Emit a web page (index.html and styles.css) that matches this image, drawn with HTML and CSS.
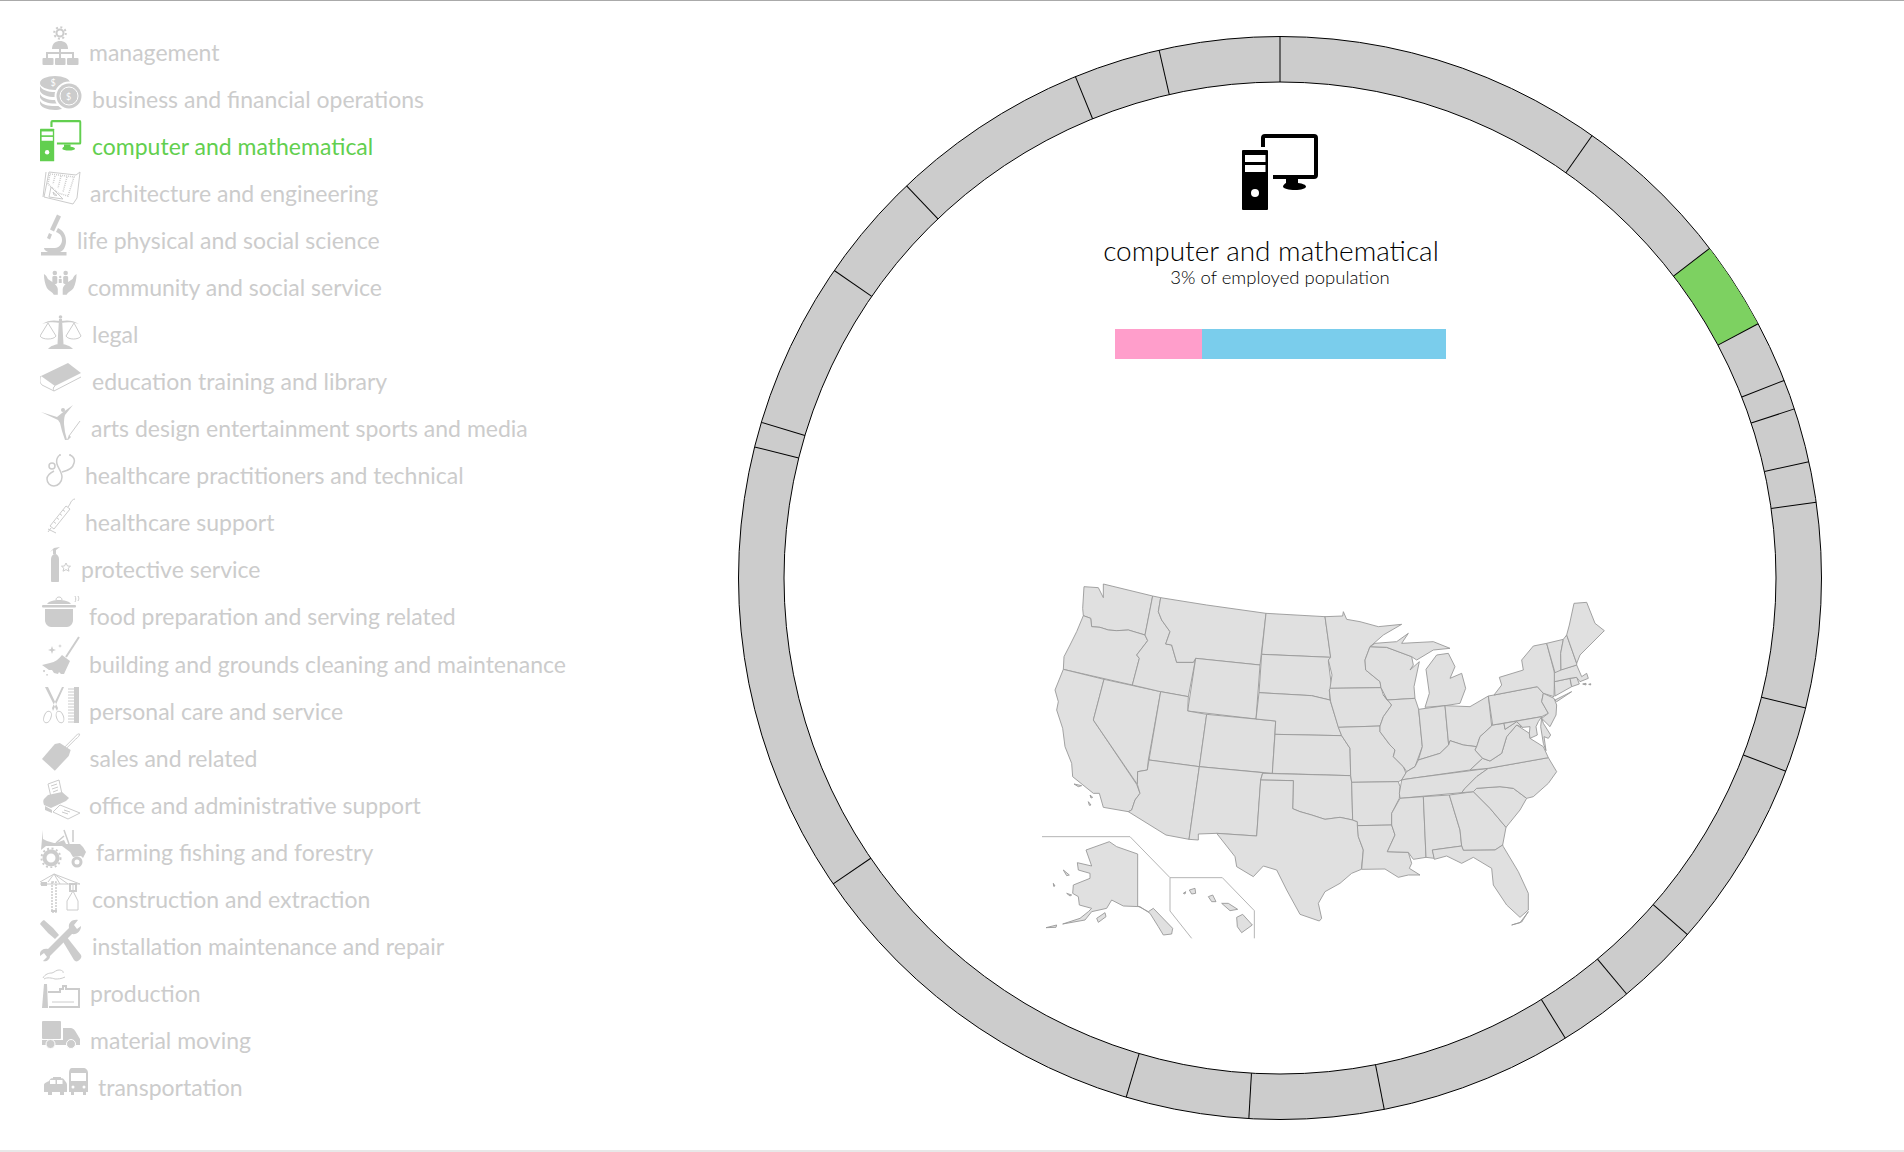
FILE: index.html
```html
<!DOCTYPE html>
<html>
<head>
  <title>Employment by occupation</title>
  <link rel="stylesheet" href="styles.css">
</head>
<body>
  <!-- Shared computer icon, used in the list and in the centre panel -->
  <svg class="defs" width="0" height="0">
    <symbol id="ico-computer" viewBox="0 0 76 76">
      <path d="M1 16h24a1 1 0 0 1 1 1v58a1 1 0 0 1-1 1H1a1 1 0 0 1-1-1V17a1 1 0 0 1 1-1z"/>
      <rect x="3" y="21" width="20.500" height="7" fill="#fff"/>
      <rect x="3" y="31" width="20.500" height="7" fill="#fff"/>
      <circle cx="13" cy="59" r="4" fill="#fff"/>
      <path d="M21 13V4a2 2 0 0 1 2-2h49a2 2 0 0 1 2 2v37a2 2 0 0 1-2 2H31" fill="none" stroke="currentColor" stroke-width="4"/>
      <path d="M44 45h12v4c5 .5 8 2 8 3.500 0 2-5 3.500-11 3.500s-12-1.500-12-3.500c0-1.500 2-3 3-3.500z"/>
    </symbol>
  </svg>

  <!-- Occupation list -->
  <ul class="jobs">
    <li class="job">
      <svg class="icon" width="40" height="44" viewBox="0 0 40 44">
        <circle cx="20" cy="9" r="3.500" class="ln2"/>
        <circle cx="20" cy="9" r="5.800" class="teeth"/>
        <path d="M12 25c0-6 4-8 8-8s8 2 8 8z"/>
        <path class="ln2" d="M20 25v9M7 34v-5h26v5"/>
        <rect x="2.500" y="34" width="11" height="7" rx="1"/>
        <rect x="15" y="34" width="10.500" height="7" rx="1"/>
        <rect x="27" y="34" width="11.500" height="7" rx="1"/>
      </svg>
      <span>management</span>
    </li>
    <li class="job">
      <svg class="icon" width="43" height="44" viewBox="0 0 43 44">
        <ellipse cx="15" cy="12" rx="15" ry="7"/>
        <path d="M0 15c2 4 8 6 15 6 4 0 6 0 9-2v6c-3 1-5 1-9 1-7 0-13-2-15-6z"/>
        <path d="M0 23c2 4 8 6 15 6h3l1 3c-1 0-3 .500-4 .500-7 0-13-2-15-6z"/>
        <path d="M0 30c2 4 8 5 15 5h5l2 3c-2 .500-5 1-7 1-8 0-15-3-15-7z"/>
        <circle cx="29" cy="25" r="14.500" fill="#fff"/>
        <circle cx="29" cy="25" r="12.500"/>
        <circle cx="29" cy="25" r="9" fill="none" stroke="#fff"/>
        <text class="coin" x="10.500" y="15">$</text>
        <text class="coin" x="26" y="29">$</text>
      </svg>
      <span>business and financial operations</span>
    </li>
    <li class="job active">
      <svg class="icon" width="43" height="44" viewBox="0 0 43 44"><use href="#ico-computer" x="0" y="2" width="41.500" height="41.500"/></svg>
      <span>computer and mathematical</span>
    </li>
    <li class="job">
      <svg class="icon" width="41" height="44" viewBox="0 0 41 44">
        <path class="ln" d="M9 7l27 3 4-3-3 26-4 6-29-7z"/>
        <path class="ln" d="M3 32l3-25"/>
        <path class="grid" d="M10 9l24 3-6 19-10-3-10-9zM15 11l-2 8M21 11l-3 12M27 12l-4 15"/>
        <path class="ln" d="M11 22l12 12-14-2zM13 27l1 3 3 .500z"/>
      </svg>
      <span>architecture and engineering</span>
    </li>
    <li class="job">
      <svg class="icon" width="28" height="44" viewBox="0 0 28 44">
        <path d="M17 2.500l4 2-7 15-4-2z"/>
        <path d="M18 16c6 3 8 8 8 13 0 6-3 10-6 11H8c-3-1-4-3-4-4h11c4 0 7-4 7-8 0-3-1-6-6-8z"/>
        <path d="M9 21l3 1.500-2 5-3-1.500z"/>
        <rect x="1" y="40" width="25.500" height="3.500"/>
      </svg>
      <span>life physical and social science</span>
    </li>
    <li class="job">
      <svg class="icon" width="38.500" height="44" viewBox="0 0 39 44">
        <path d="M4 15c2 1 3 3 4 5l6 4c2 2 4 4 4 6v6h-4c-1-3-5-4-7-7-2-4-3-9-3-14z"/>
        <path d="M37 15c-2 1-3 3-4 5l-6 4c-2 2-4 4-4 6v6h4c1-3 5-4 7-7 2-4 3-9 3-14z"/>
        <circle cx="15" cy="14" r="2.300"/><circle cx="26" cy="14" r="2.300"/>
        <rect x="12.500" y="17" width="5" height="8" rx="1.500"/><rect x="23.500" y="17" width="5" height="8" rx="1.500"/>
        <circle cx="20.500" cy="18" r="1.200"/><rect x="19" y="20" width="3" height="4"/>
      </svg>
      <span>community and social service</span>
    </li>
    <li class="job">
      <svg class="icon" width="43" height="44" viewBox="0 0 43 44">
        <circle cx="20.500" cy="10" r="1.800"/>
        <path d="M19 12h3l1.500 25h-6zM2 17c6-4 12-4 18-3h1c6-1 12-1 18 3-6-2-12-2-18-1h-1c-6-1-12-1-18 1z"/>
        <path d="M8 42c2-3 8-5 12.500-5s10 2 12.500 5z"/>
        <path class="ln" d="M8 16L0 29c2 4 14 4 16 0zM34 16l-8 13c2 4 13 4 15 0z"/>
      </svg>
      <span>legal</span>
    </li>
    <li class="job">
      <svg class="icon" width="43" height="44" viewBox="0 0 43 44">
        <path d="M1 22L28 9l13 10-26 13z"/>
        <path class="ln" d="M1 22c-2 4-1 7 1 9l12 6 27-14M15 32c-2 1-2 3-1 5"/>
      </svg>
      <span>education training and library</span>
    </li>
    <li class="job">
      <svg class="icon" width="42" height="44" viewBox="0 0 42 44">
        <circle cx="23" cy="9" r="2"/>
        <path d="M1 11l16 5 5-4 11-8-8 10c-1 3-1 6-1 9l1 8 2 8h-2l-3-9-2-8-2-3z"/>
        <path class="ln" d="M40 20L29 35"/>
        <path d="M29 34l2 2-3 3-1 0z"/>
      </svg>
      <span>arts design entertainment sports and media</span>
    </li>
    <li class="job">
      <svg class="icon" width="36" height="44" viewBox="0 0 36 44">
        <path class="ln1" d="M20 7c-3 2-4 5-3 9 1 4 5 8 5 13 0 5-4 9-8 9s-7-3-7-7c0-4 3-6 7-8M30 7c4 2 5 5 4 8-1 5-7 8-12 9"/>
        <circle cx="20" cy="7" r="1"/><circle cx="30" cy="7" r="1"/>
        <circle cx="12" cy="18" r="3" class="ln1"/>
      </svg>
      <span>healthcare practitioners and technical</span>
    </li>
    <li class="job">
      <svg class="icon" width="36" height="44" viewBox="0 0 36 44">
        <path class="ln" d="M10 31l16-20 4 3-16 20zM8 34l8 4M8 37l3-4M28 12l2-3c1-3 3-5 5-5M14 27l2 1.500M17 23l2 1.500M20 19l2 1.500M23 15l2 1.500"/>
      </svg>
      <span>healthcare support</span>
    </li>
    <li class="job">
      <svg class="icon" width="32" height="44" viewBox="0 0 32 44">
        <path d="M11 17c0-3 2-5 4-5s4 2 4 5v22c0 1-1 1-1 1h-6s-1 0-1-1z"/>
        <path d="M13 12V8l-3 2 4-4 6-1-4 3v4z"/>
        <path class="ln" d="M26 21l1.500 3 3 .200-2.300 2 .800 3-3-1.600-3 1.600.800-3-2.300-2 3-.200z"/>
      </svg>
      <span>protective service</span>
    </li>
    <li class="job">
      <svg class="icon" width="40" height="44" viewBox="0 0 40 44">
        <path d="M5 20h28v11c0 4-3 7-6 7H11c-3 0-6-3-6-7z"/>
        <rect x="2" y="16" width="34" height="2.500" rx="1"/>
        <path d="M7 15c2-3 7-4 12-4s10 1 12 4z"/>
        <path class="ln" d="M16 11c0-4 6-4 6 0M35 13c1-2 1-4 0-6M38 12c1-2 1-3 0-5"/>
      </svg>
      <span>food preparation and serving related</span>
    </li>
    <li class="job">
      <svg class="icon" width="40" height="44" viewBox="0 0 40 44">
        <path class="ln2" d="M39 1L26 21"/>
        <path d="M22 19l8 6-6 13-3 0-2-2-1 2-4-1-2-3-3 0-7-5 8-2c5-1 9-4 12-8z"/>
        <path d="M11 15l1 3 1-3 3-1-3-1-1-3-1 3-3 1zM20 8l.500 1.500L22 10l-1.500.500L20 12l-.500-1.500L18 10l1.500-.500zM4 34a1 1 0 1 0 .100 0zM7 38a.800.800 0 1 0 .100 0z"/>
      </svg>
      <span>building and grounds cleaning and maintenance</span>
    </li>
    <li class="job">
      <svg class="icon" width="40" height="44" viewBox="0 0 40 44">
        <path d="M5 4l12 24 1-3-10-21zM24 4L13 28l-1-3 10-21z"/>
        <ellipse cx="7.500" cy="34" rx="3.500" ry="6" class="ln" transform="rotate(20 7.500 34)"/>
        <ellipse cx="20" cy="34" rx="3.500" ry="6" class="ln" transform="rotate(-20 20 34)"/>
        <rect x="34" y="4" width="5" height="36"/>
        <path class="ln" d="M34 6h-6M34 9h-6M34 12h-6M34 15h-6M34 18h-6M34 21h-6M34 24h-6M34 27h-6M34 30h-6M34 33h-6M34 36h-6M34 39h-6"/>
      </svg>
      <span>personal care and service</span>
    </li>
    <li class="job">
      <svg class="icon" width="40.600" height="44" viewBox="0 0 41 44">
        <path d="M20 13l11 7-2 6-14 15-13-12 13-15z"/>
        <path class="ln" d="M25 17l10-10c2-3 5-4 5-3s-1 3-4 5l-9 9"/>
      </svg>
      <span>sales and related</span>
    </li>
    <li class="job">
      <svg class="icon" width="40" height="44" viewBox="0 0 40 44">
        <path class="ln" fill="#fff" d="M8 7l11-4 3 14-11 3zM11 9l6-2M12 12l6-2M13 15l5-2"/>
        <path d="M8 18l14-3 7 6-3 3-15 7-7-3c-1-3-1-5 0-6z"/>
        <path d="M5 29l7 4v3l-7-3z"/>
        <path class="ln" d="M20 28l20 8-12 6-15-7zM24 33l6 2M22 35l6 2"/>
      </svg>
      <span>office and administrative support</span>
    </li>
    <li class="job">
      <svg class="icon" width="47" height="44" viewBox="0 0 47 44">
        <path d="M2 6l1 9 4 2 7 2h2l8-3 2 4h14l3 3 3 5-3 6-2-2-8 1-3-5-8-6H6l-5 4 1-11z"/>
        <path class="ln1" d="M24 6l5 14M33 6v12M16 19l8-7"/>
        <circle cx="11" cy="34" r="6.500" class="ln4"/>
        <circle cx="11" cy="34" r="9.500" class="teeth"/>
        <circle cx="37" cy="38" r="4" class="ln3"/>
      </svg>
      <span>farming fishing and forestry</span>
    </li>
    <li class="job">
      <svg class="icon" width="43" height="44" viewBox="0 0 43 44">
        <path class="ln" d="M0 11l14-8 26 10H0M14 3l-6 8M14 3l6 10M14 3l14 10M33 13v7"/>
        <path class="grid2" d="M12 11h4v30h-4z"/>
        <rect x="1" y="11" width="6" height="4"/>
        <rect x="11" y="39" width="6" height="2"/>
        <path class="ln2" d="M30 13h6v7h-6z"/>
        <path class="ln" d="M33 20l-6 10v9h11v-9z"/>
      </svg>
      <span>construction and extraction</span>
    </li>
    <li class="job">
      <svg class="icon" width="43" height="44" viewBox="0 0 43 44">
        <path d="M4 1l9 8 6 7-4 4-7-6-8-9c1-2 2-3 4-4z"/>
        <path d="M22 21l4-4 15 19c1 2 0 4-3 6-2 1-3 0-4-1z"/>
        <path d="M41 7c0 5-4 9-9 8L10 37c0 4-4 6-7 5l4-4-3-4-4 3c-1-4 2-8 8-7l21-21c-1-5 3-9 9-8l-4 5 3 4z"/>
      </svg>
      <span>installation maintenance and repair</span>
    </li>
    <li class="job">
      <svg class="icon" width="41" height="44" viewBox="0 0 41 44">
        <path class="ln" d="M3 12c2-4 6-5 9-5 3-1 4-3 7-3 2 0 5 1 4 3M4 13c3-2 8-1 11 0 3 0 6 0 10-2"/>
        <path d="M4 18h3l1 24H2z"/>
        <path class="ln2" d="M8 26h12v-3h3v-3h3v3h13v18H9"/>
        <path class="ln" d="M12 36h22"/>
      </svg>
      <span>production</span>
    </li>
    <li class="job">
      <svg class="icon" width="41" height="44" viewBox="0 0 41 44">
        <rect x="2" y="8" width="19" height="18" rx="1"/>
        <path d="M23 15h8c2 0 4 2 6 6l3 5v6H2v-5h21z"/>
        <circle cx="10.500" cy="31" r="4.500" stroke="#fff"/>
        <circle cx="31" cy="31" r="4.500" stroke="#fff"/>
      </svg>
      <span>material moving</span>
    </li>
    <li class="job">
      <svg class="icon" width="49" height="44" viewBox="0 0 49 44">
        <path d="M13 17h8v2h-8zM9 21c1-2 2-3 4-3h8c2 0 3 1 4 3 1 1 2 2 2 4v7h-3v3h-4v-3h-8v3H8v-3H4v-7c0-2 3-3 5-4z"/>
        <rect x="10" y="20" width="5.500" height="4" fill="#fff"/>
        <rect x="17" y="20" width="5.500" height="4" fill="#fff"/>
        <path d="M32 8h11c3 0 5 2 5 5v19h-2v3h-3v-3H34v3h-3v-3h-2V13c0-3 1-5 3-5z"/>
        <rect x="31" y="13" width="15" height="8" fill="#fff"/>
        <circle cx="33" cy="27" r="1.500" fill="#fff"/><circle cx="44" cy="27" r="1.500" fill="#fff"/>
      </svg>
      <span>transportation</span>
    </li>
  </ul>

  <!-- Ring with one slice per occupation, centre panel on top -->
  <div class="stage">
    <svg class="ring" width="1100" height="1100" viewBox="-550 -550 1100 1100">
      <circle class="ring-band" r="541.500"/>
      <circle class="ring-active" r="518.750" pathLength="360" stroke-dasharray="9.500 350.500" stroke-dashoffset="-52.500" transform="rotate(-90)"/>
      <circle class="ring-hole" r="496"/>
      <g class="ring-cuts">
        <path d="M0-496V-541.500"/>
        <path d="M0-496V-541.500" transform="rotate(35.200)"/>
        <path d="M0-496V-541.500" transform="rotate(52.500)"/>
        <path d="M0-496V-541.500" transform="rotate(62)"/>
        <path d="M0-496V-541.500" transform="rotate(68.600)"/>
        <path d="M0-496V-541.500" transform="rotate(71.800)"/>
        <path d="M0-496V-541.500" transform="rotate(77.600)"/>
        <path d="M0-496V-541.500" transform="rotate(81.950)"/>
        <path d="M0-496V-541.500" transform="rotate(103.900)"/>
        <path d="M0-496V-541.500" transform="rotate(110.900)"/>
        <path d="M0-496V-541.500" transform="rotate(131.200)"/>
        <path d="M0-496V-541.500" transform="rotate(140.200)"/>
        <path d="M0-496V-541.500" transform="rotate(148.200)"/>
        <path d="M0-496V-541.500" transform="rotate(168.900)"/>
        <path d="M0-496V-541.500" transform="rotate(183.300)"/>
        <path d="M0-496V-541.500" transform="rotate(196.500)"/>
        <path d="M0-496V-541.500" transform="rotate(235.600)"/>
        <path d="M0-496V-541.500" transform="rotate(284)"/>
        <path d="M0-496V-541.500" transform="rotate(286.700)"/>
        <path d="M0-496V-541.500" transform="rotate(304.600)"/>
        <path d="M0-496V-541.500" transform="rotate(316.400)"/>
        <path d="M0-496V-541.500" transform="rotate(337.800)"/>
        <path d="M0-496V-541.500" transform="rotate(347.100)"/>
      </g>
    </svg>

    <div class="panel">
      <svg class="panel-icon" width="76" height="76"><use href="#ico-computer" width="76" height="76"/></svg>
      <h1 class="panel-title">computer and mathematical</h1>
      <p class="panel-sub">3% of employed population</p>
      <div class="gender-bar">
        <div class="gender-f" style="width: 87.500px"></div>
        <div class="gender-m" style="width: 243.500px"></div>
      </div>

      <!-- State map, drawn in 3x units -->
      <svg class="map" width="620" height="400" viewBox="0 0 1860 1200">
        <g class="states">
          <polygon points="192,80 235,83 250,113 250,72 398,108 375,225 325,210 290,212 265,210 240,202 215,200 212,175 190,167 188,145"/>
          <polygon points="190,167 212,175 215,200 240,202 265,210 290,212 325,210 375,225 383,242 350,285 358,295 337,375 130,328 132,290 150,255 170,215"/>
          <polygon points="130,328 252,358 220,480 350,673 360,700 345,720 335,750 325,755 250,742 238,700 220,700 158,650 155,610 135,560 128,505 110,450 115,425 105,390"/>
          <polygon points="252,358 422,395 385,600 382,630 353,635 352,673 220,480"/>
          <polygon points="398,108 422,113 415,155 425,180 450,215 437,252 455,255 470,307 520,307 527,295 505,410 422,395 337,375 358,295 350,285 383,242 375,225"/>
          <polygon points="422,113 560,135 738,160 720,315 527,295 520,307 470,307 455,255 437,252 450,215 425,180 415,155"/>
          <polygon points="527,295 720,315 708,477 503,453"/>
          <polygon points="422,395 505,410 503,453 560,463 538,620 387,600"/>
          <polygon points="560,463 767,483 757,640 538,620"/>
          <polygon points="387,600 538,620 507,838 438,825 325,755 335,750 345,720 360,700 352,673 353,635 382,630"/>
          <polygon points="538,620 728,638 722,660 710,828 590,820 535,822 535,840 507,838"/>
          <polygon points="738,160 915,170 932,292 725,283"/>
          <polygon points="725,283 932,292 925,303 935,383 928,390 930,420 900,413 875,407 717,398"/>
          <polygon points="717,398 875,407 900,413 930,420 955,500 965,527 765,523 767,483 708,477"/>
          <polygon points="765,523 965,527 990,565 992,647 757,640"/>
          <polygon points="728,640 992,647 995,667 998,780 960,772 915,778 875,765 840,755 818,746 820,662 722,660"/>
          <polygon points="722,660 820,662 818,746 840,755 875,765 915,778 960,772 998,780 1012,785 1015,830 1030,870 1024,928 995,940 960,970 915,995 895,1030 905,1075 898,1083 840,1063 800,990 770,930 730,918 700,950 650,920 645,890 590,820 710,828"/>
          <polygon points="915,170 968,168 970,155 980,178 1020,185 1075,200 1145,193 1090,225 1050,260 1035,300 1037,330 1080,365 1083,383 930,385 936,345 925,300 932,292"/>
          <polygon points="930,385 1083,383 1090,405 1115,435 1090,470 1080,498 955,502 932,425 928,390"/>
          <polygon points="955,502 1080,498 1080,515 1110,555 1125,570 1120,590 1150,620 1158,640 1145,660 1135,665 995,667 992,647 990,565 965,527"/>
          <polygon points="995,667 1135,665 1140,680 1138,715 1115,760 1115,795 1012,797 1012,785 998,780"/>
          <polygon points="1012,797 1115,795 1125,825 1102,875 1165,877 1175,910 1168,925 1200,945 1165,945 1135,952 1095,927 1025,928 1030,870 1015,830"/>
          <polygon points="1050,260 1100,262 1175,290 1180,315 1170,330 1198,305 1182,380 1185,415 1102,420 1083,383 1080,365 1037,330 1035,300"/>
          <polygon points="1050,260 1065,250 1130,245 1165,220 1145,250 1240,245 1290,265 1240,270 1190,300 1175,290 1100,262"/>
          <polygon points="1218,328 1250,285 1285,280 1305,320 1290,355 1325,340 1337,385 1320,430 1275,437 1215,442 1228,400"/>
          <polygon points="1102,420 1185,415 1196,448 1207,560 1185,620 1160,635 1150,620 1120,590 1125,570 1110,555 1080,515 1080,498 1090,470 1115,435 1090,405"/>
          <polygon points="1196,448 1275,437 1286,555 1260,580 1195,600 1207,560"/>
          <polygon points="1275,437 1350,440 1405,408 1415,498 1380,530 1370,560 1330,555 1290,542 1286,555"/>
          <polygon points="1195,600 1260,580 1286,555 1290,542 1330,555 1370,560 1365,570 1388,595 1350,630 1155,658 1145,660 1160,635 1185,620"/>
          <polygon points="1145,660 1155,658 1190,653 1405,625 1370,650 1335,685 1325,698 1140,715 1138,700"/>
          <polygon points="1140,715 1210,710 1218,892 1180,898 1165,877 1102,875 1125,825 1115,795 1115,760"/>
          <polygon points="1210,710 1288,705 1320,810 1325,858 1237,870 1243,895 1218,892"/>
          <polygon points="1288,705 1360,695 1410,745 1458,802 1448,855 1425,870 1330,871 1325,858 1320,810"/>
          <polygon points="1237,870 1325,858 1330,871 1425,870 1448,855 1450,860 1495,935 1525,1000 1525,1050 1500,1072 1460,1035 1420,975 1415,925 1360,892 1325,910 1280,888 1243,898"/>
          <polygon points="1360,695 1370,685 1440,680 1480,685 1520,715 1500,750 1458,802 1410,745"/>
          <polygon points="1325,698 1335,685 1370,650 1405,625 1585,593 1610,635 1585,670 1540,710 1520,715 1480,685 1440,680 1370,685 1360,695"/>
          <polygon points="1350,630 1388,595 1410,603 1445,580 1460,530 1490,495 1528,520 1530,535 1570,560 1585,593 1405,625"/>
          <polygon points="1365,570 1370,560 1380,530 1415,498 1418,495 1452,490 1455,508 1490,485 1508,502 1490,495 1460,530 1445,580 1410,603 1388,595"/>
          <polygon points="1405,408 1422,405 1552,380 1570,400 1565,425 1585,460 1565,470 1418,495"/>
          <polygon points="1422,405 1552,380 1570,400 1602,410 1604,340 1580,250 1540,258 1505,300 1510,330 1438,352 1445,375"/>
          <polygon points="1452,490 1565,470 1555,485 1548,500 1552,525 1530,535 1528,520 1530,500 1508,502 1490,485 1455,508"/>
          <polygon points="1565,472 1570,490 1592,525 1585,535 1572,530 1578,572 1570,550 1562,500"/>
          <polygon points="1570,400 1602,415 1610,435 1608,465 1590,500 1565,475 1585,460 1565,425"/>
          <polygon points="1605,420 1655,395 1610,425"/>
          <polygon points="1603,365 1650,355 1655,380 1605,408"/>
          <polygon points="1650,355 1670,352 1678,372 1655,380"/>
          <polygon points="1603,335 1670,315 1685,350 1700,340 1705,355 1680,365 1670,352 1650,355 1603,365"/>
          <polygon points="1580,250 1630,238 1622,280 1623,330 1605,338"/>
          <polygon points="1630,238 1640,225 1670,310 1670,315 1623,330 1622,280"/>
          <polygon points="1640,225 1648,195 1662,130 1700,127 1725,190 1753,212 1710,255 1680,285 1670,310"/>
          <polygon points="1688,372 1698,370 1698,375"/>
          <polygon points="1706,373 1712,371 1712,375"/>
          <polygon points="1475,1095 1500,1088 1525,1055 1505,1086"/>
          <!-- California islands -->
          <polygon points="162,672 185,677 175,680"/>
          <polygon points="210,705 218,712 213,714"/>
          <polygon points="205,725 213,735 208,736"/>
          <!-- Alaska and Hawaii insets -->
          <polygon points="198,870 268,845 290,860 353,882 353,1038 385,1055 400,1045 458,1105 455,1122 430,1125 415,1100 390,1060 360,1040 310,1038 275,1020 260,1045 215,1055 195,1080 128,1092 180,1075 205,1055 215,1045 178,1035 175,1010 158,1000 160,975 210,955 210,940 175,930 172,908 215,918"/>
          <polygon points="230,1075 255,1058 258,1070 235,1087"/>
          <polygon points="78,1103 110,1095 108,1102"/>
          <polygon points="130,930 148,945 140,947"/>
          <polygon points="100,970 105,978 101,979"/>
          <polygon points="140,1000 155,1005 150,1008"/>
          <polygon points="650,1072 668,1063 697,1095 665,1118 652,1100"/>
          <polygon points="605,1030 625,1030 653,1048 630,1052"/>
          <polygon points="565,1010 578,1005 588,1025 575,1025"/>
          <polygon points="508,990 525,985 527,1000 515,1002"/>
          <polygon points="490,1000 497,995 495,1002"/>
        </g>
        <path class="insets" d="M66 830H330L450 953H607L703 1052V1135M450 953V1053L515 1135"/>
      </svg>
    </div>
  </div>
</body>
</html>
```

FILE: styles.css
```css
/* Page frame */
html, body {
  margin: 0;
  padding: 0;
  background: #fff;
}

body {
  box-sizing: border-box;
  display: flex;
  height: 1152px;
  overflow: hidden;
  border-top: 1px solid #aaa;
  border-bottom: 2px solid #e8e8e8;
  font-family: Lato, "Open Sans", sans-serif;
}

.defs {
  position: absolute;
}

/* Occupation list */
.jobs {
  width: 730px;
  flex: none;
  margin: 0;
  padding: 21.500px 0 0 40px;
  box-sizing: border-box;
  list-style: none;
}

.job {
  display: flex;
  gap: 9px;
  height: 47.080px;
  align-items: center;
  color: #ccc;
  font-size: 23px;
}

.job span {
  padding-top: 11px;
}

.job.active {
  color: #62cf4f;
}

/* Icons take their colour from the row */
.icon {
  flex: none;
  fill: currentColor;
}

.ln {
  fill: none;
  stroke: currentColor;
  stroke-width: 1;
}

.ln1 {
  fill: none;
  stroke: currentColor;
  stroke-width: 1.500;
}

.ln2 {
  fill: none;
  stroke: currentColor;
  stroke-width: 2;
}

.ln3 {
  fill: none;
  stroke: currentColor;
  stroke-width: 3;
}

.ln4 {
  fill: none;
  stroke: currentColor;
  stroke-width: 4;
}

.teeth {
  fill: none;
  stroke: currentColor;
  stroke-width: 2;
  stroke-dasharray: 2 2.500;
}

.grid {
  fill: none;
  stroke: currentColor;
  stroke-width: 1.500;
  stroke-dasharray: 1 1;
}

.grid2 {
  fill: none;
  stroke: currentColor;
  stroke-width: 1.500;
  stroke-dasharray: 2 1;
}

.coin {
  fill: #fff;
  font-size: 9px;
}

/* Ring */
.stage {
  position: relative;
  width: 1100px;
  height: 1100px;
  margin-top: 27px;
  flex: none;
}

.ring {
  display: block;
}

.ring-band {
  fill: #ccc;
  stroke: #000;
  stroke-width: 1;
}

.ring-active {
  fill: none;
  stroke: #7dd161;
  stroke-width: 45;
}

.ring-hole {
  fill: #fff;
  stroke: #000;
  stroke-width: 1;
}

.ring-cuts path {
  stroke: #000;
  stroke-width: 1;
}

/* Centre panel sits over the ring */
.panel {
  position: absolute;
  top: 106px;
  left: 0;
  width: 100%;
  display: flex;
  flex-direction: column;
  align-items: center;
}

.panel-title {
  margin: 23px 18px 0 0;
  font-size: 28px;
  font-weight: 300;
  line-height: 34px;
  color: #000;
}

.panel-sub {
  margin: 0;
  font-size: 18.500px;
  font-weight: 300;
  line-height: 20px;
  color: #000;
}

.gender-bar {
  display: flex;
  height: 30px;
  margin-top: 42px;
}

.gender-f {
  background: #ff9ecb;
}

.gender-m {
  background: #7acdec;
}

/* Map */
.map {
  align-self: flex-start;
  margin: 201px 0 0 290px;
}

.states polygon {
  fill: #e0e0e0;
  stroke: #999;
  stroke-width: 2.700;
  stroke-linejoin: round;
}

.insets {
  fill: none;
  stroke: #b5b5b5;
  stroke-width: 3;
}
```
